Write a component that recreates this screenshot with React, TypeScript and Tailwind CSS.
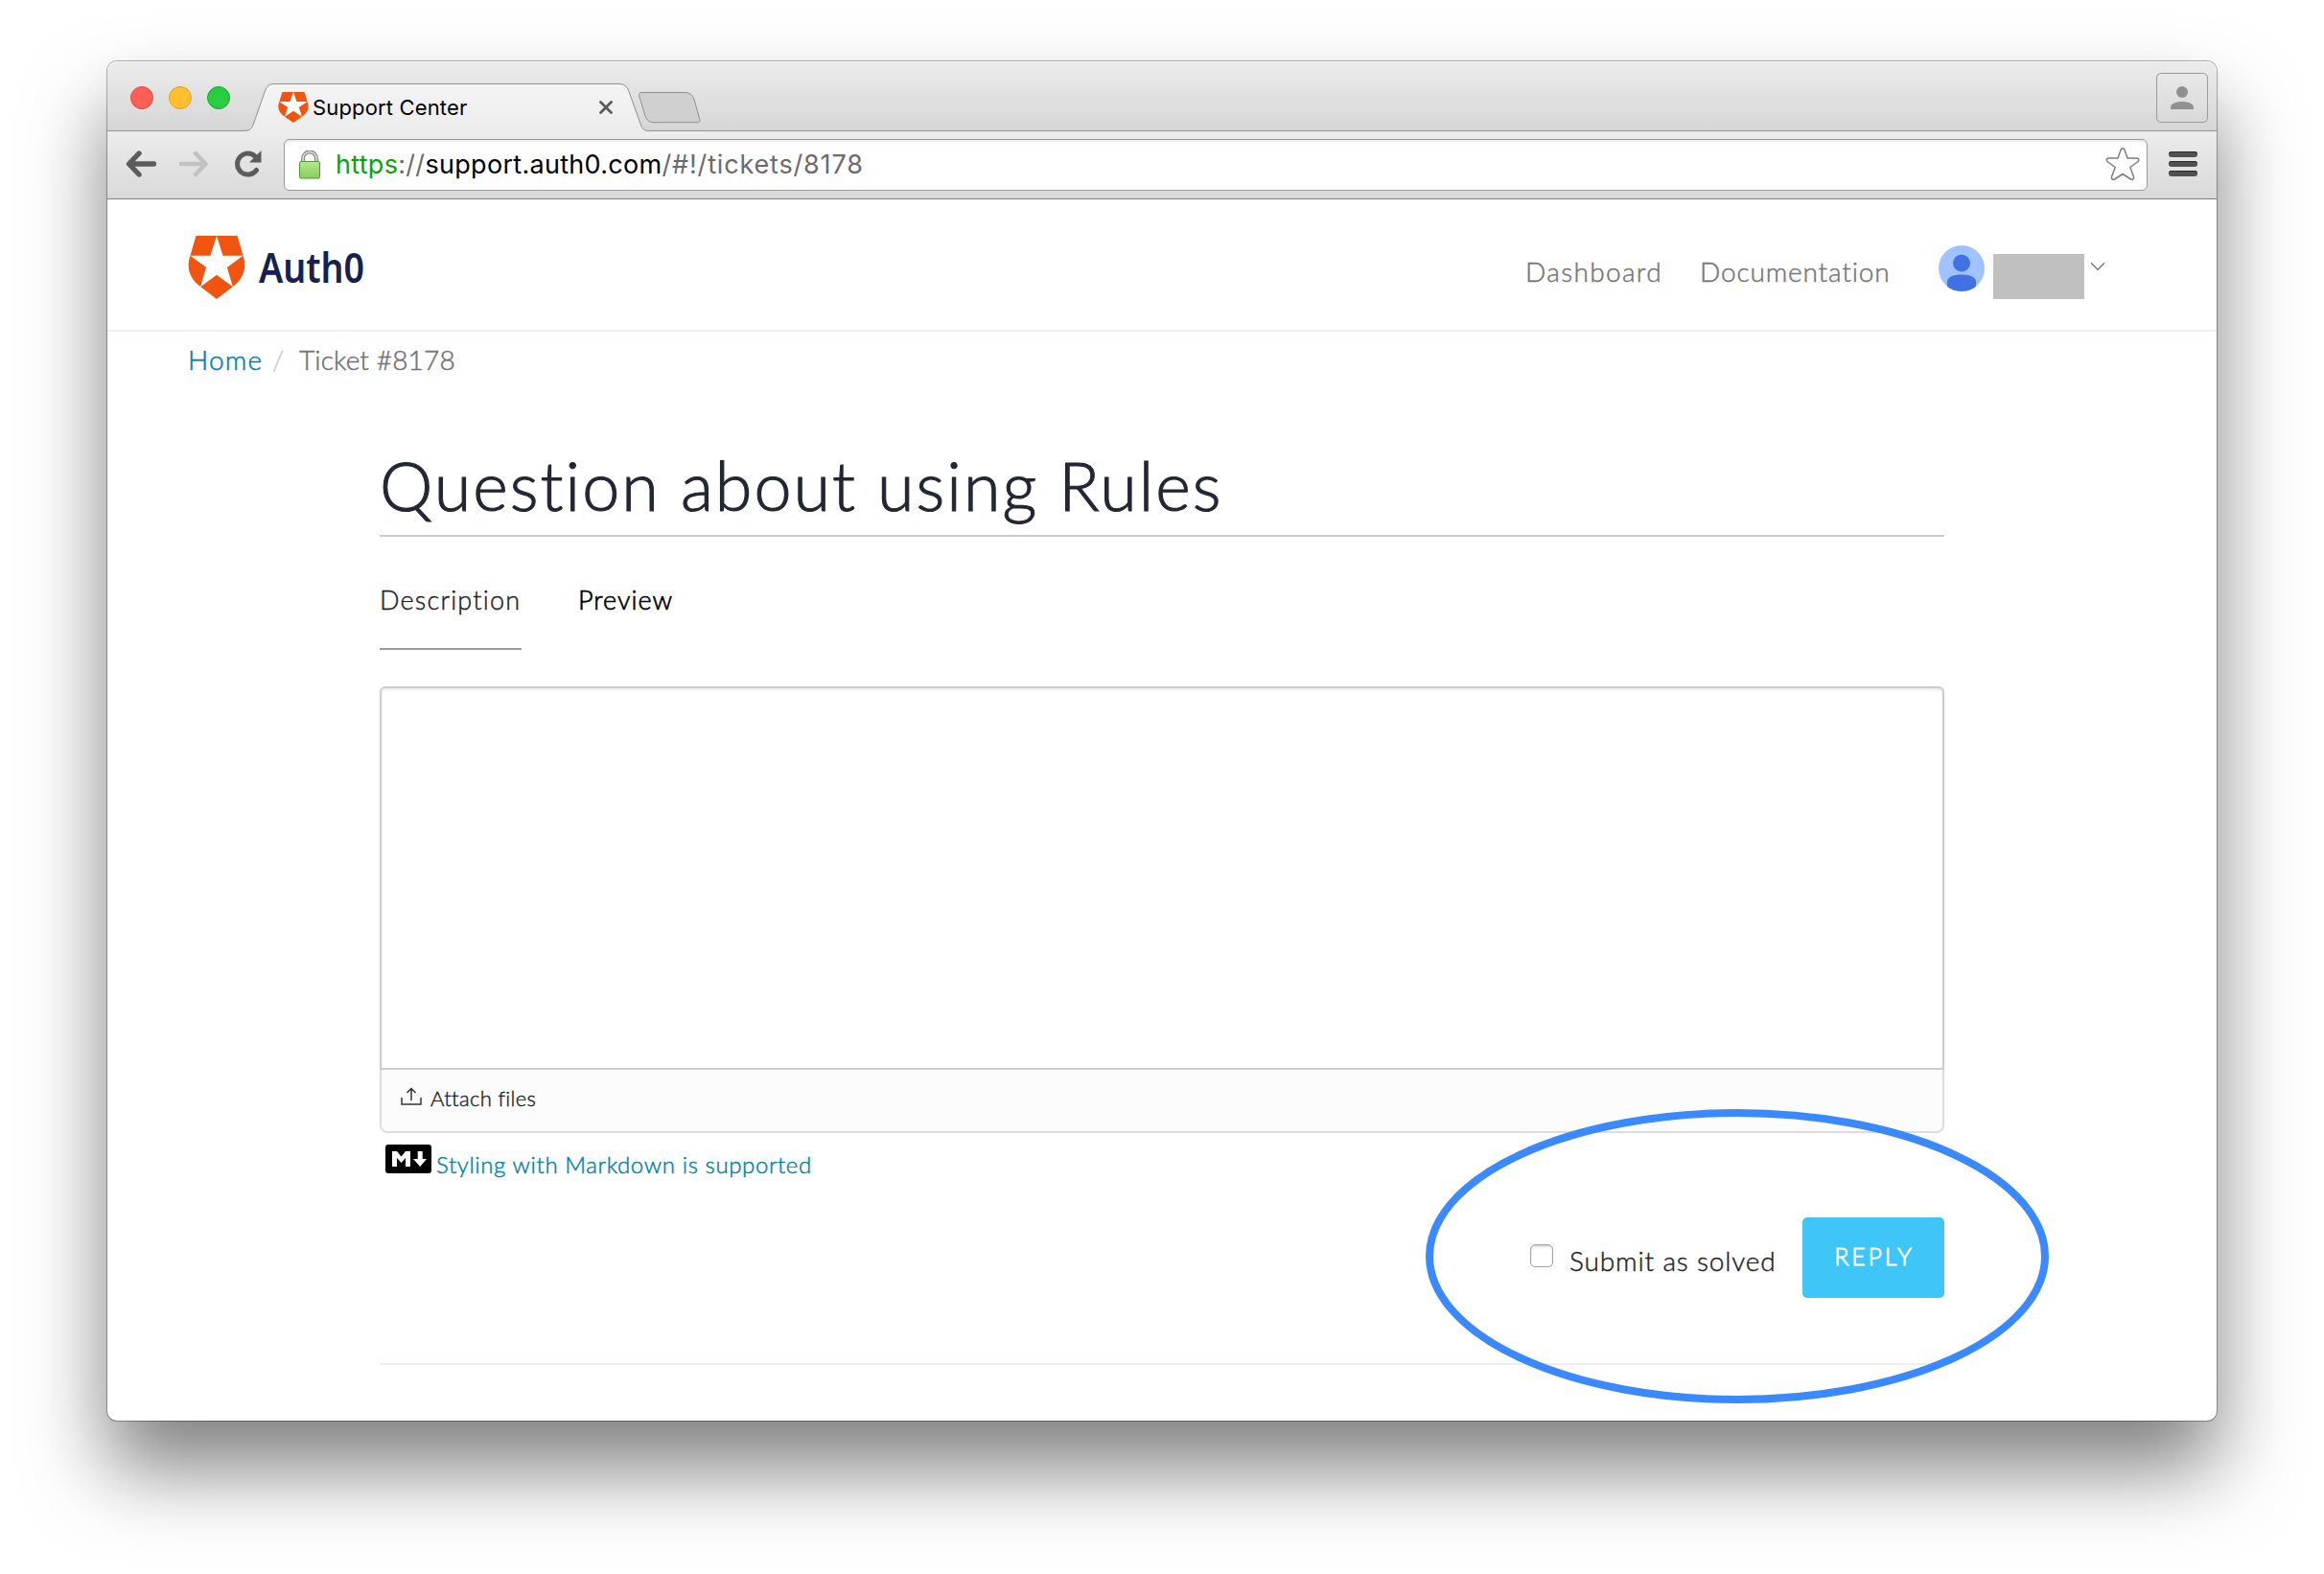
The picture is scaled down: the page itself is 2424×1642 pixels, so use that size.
import type { ReactNode } from "react";

function Shield({ className }: { className: string }) {
  return (
    <svg viewBox="48 78 179 198" preserveAspectRatio="none" className={className}>
      <path d="M73 78H202L219 138C234 180 218 215 188 237L137.500 276L87 237C57 215 40 180 56 138Z" fill="#f0540f" />
      <path
        d="M137.500 78L157 140H219.500L170 177L188 238L137.500 200L87 238L105 177L55.500 140H118Z"
        fill="#fff"
      />
    </svg>
  );
}

function TrafficLights() {
  return (
    <div className="mt-[26px] flex gap-4 self-start">
      <span className="size-6 rounded-full border border-[#e2463f] bg-[#ff5f57]" />
      <span className="size-6 rounded-full border border-[#dfa023] bg-[#ffbf2f]" />
      <span className="size-6 rounded-full border border-[#17a82c] bg-[#28ce41]" />
    </div>
  );
}

function BrowserTab() {
  return (
    <div className="relative -mb-px ml-[10px] flex h-[50px] w-[428px] items-center pl-10">
      <svg viewBox="0 0 428 50" className="absolute inset-0 h-[50px] w-[428px]">
        <defs>
          <linearGradient id="tab" x1="0" y1="0" x2="0" y2="1">
            <stop offset="0" stopColor="#f4f4f4" />
            <stop offset="1" stopColor="#ececec" />
          </linearGradient>
        </defs>
        <path
          d="M5 50V49.500C11 49.500 12.500 47 14.500 42L26 9C28.500 2 31 .5 37 .5H395C401 .5 404 3 406 8.500L418 42C420 47.500 421.500 49.500 426 49.500V50Z"
          fill="url(#tab)"
        />
        <path
          d="M4 49.500C11 49.500 12.500 47 14.500 42L26 9C28.500 2 31 .5 37 .5H395C401 .5 404 3 406 8.500L418 42C420 47.500 421.500 49.500 427 49.500"
          fill="none"
          stroke="#8f8f8f"
        />
      </svg>
      <Shield className="relative h-8 w-8" />
      <span className="relative ml-1 w-[299px] font-[Inter] text-[22px] tracking-[0.15px] text-black">
        Support Center
      </span>
      <svg viewBox="0 0 14 14" className="relative size-[14px] shrink-0">
        <path d="M1.500 1.500L12.500 12.500M12.500 1.500L1.500 12.500" stroke="#5a5a5a" strokeWidth="2.800" strokeLinecap="round" />
      </svg>
    </div>
  );
}

function TabStrip() {
  return (
    <div className="flex h-[73px] items-end rounded-t-[10px] border-b border-[#929292] bg-linear-to-b from-[#ececec] to-[#d6d6d6] pl-6 shadow-[inset_0_1px_0_#f6f6f6]">
      <TrafficLights />
      <BrowserTab />
      <svg viewBox="0 0 68 36" className="mb-[6px] -ml-[14px] h-9 w-[68px]">
        <path
          d="M6 2.500H49C56 2.500 58 5 60 9.500L65.500 29.500C66.500 33 65.500 33.700 63 33.700H19C13 33.700 11 31.500 9 27L3 7C2 3.500 3 2.500 6 2.500Z"
          fill="#d0d0d0"
          stroke="#8f8f8f"
        />
      </svg>
      <div className="mt-3 mr-[9px] ml-auto flex h-[52px] w-[54px] justify-center self-start rounded-[5px] border border-[#9b9b9b] pt-[13px]">
        <svg viewBox="0 0 24 24" className="size-6">
          <circle cx="12" cy="6" r="6" fill="#919191" />
          <path d="M0 24V22C0 18 6 16 12 16S24 18 24 22V24Z" fill="#919191" />
        </svg>
      </div>
    </div>
  );
}

function Toolbar() {
  return (
    <div className="flex h-[71px] items-center border-b border-[#808080] bg-linear-to-b from-[#ececec] to-[#d9d9d9] pl-[19px]">
      <svg viewBox="0 0 32 28" className="mb-0.5 h-7 w-8">
        <path d="M29.500 14H4M14 3L3.500 14L14 25" fill="none" stroke="#5c5c5c" strokeWidth="5.400" strokeLinecap="round" strokeLinejoin="round" />
      </svg>
      <svg viewBox="0 0 32 28" className="mb-0.5 ml-[23px] h-7 w-8">
        <path d="M3 14H28M18 3L28.500 14L18 25" fill="none" stroke="#c2c2c2" strokeWidth="4.600" strokeLinecap="round" strokeLinejoin="round" />
      </svg>
      <svg viewBox="0 0 28 28" className="mb-0.5 ml-[27px] size-7">
        <path d="M22.500 20.500A11 11 0 1 1 21.500 6.500" fill="none" stroke="#5c5c5c" strokeWidth="5" strokeLinecap="round" />
        <path d="M27.500 0V12.500H15Z" fill="#5c5c5c" />
      </svg>
      <div className="ml-[23px] flex h-[54px] w-[1944px] items-center rounded-md border border-[#9a9a9a] bg-white pr-[7px] pl-[15px] shadow-[inset_0_2px_2px_rgba(0,0,0,0.08)]">
        <svg viewBox="0 0 22 30" className="h-[30px] w-[22px]">
          <defs>
            <linearGradient id="lock" x1="0" y1="0" x2="0" y2="1">
              <stop offset="0" stopColor="#b7e78d" />
              <stop offset="1" stopColor="#86cf5e" />
            </linearGradient>
          </defs>
          <path d="M4 12V8.500A7 7 0 0 1 18 8.500V12" fill="none" stroke="#858585" strokeWidth="4" />
          <path d="M4 12V8.500A7 7 0 0 1 18 8.500V12" fill="none" stroke="#e0e0e0" strokeWidth="1.600" />
          <rect x="0.500" y="11.500" width="21" height="17.500" rx="1.500" fill="url(#lock)" stroke="#4f9a35" />
        </svg>
        <span className="ml-4 flex-1 font-[Inter] text-[27px] tracking-[0.83px] whitespace-nowrap text-[#6b6b6b]">
          <span className="tracking-[0.3px]">
            <span className="text-[#07a30a]">https</span>://<span className="text-black">support.auth0.com</span>
          </span>
          /#!/tickets/8178
        </span>
        <svg viewBox="0 0 36 36" className="mb-0.5 size-9">
          <path
            d="M16.200 3Q18 .2 19.800 3L23 12H33Q36 13 34 15.500L25.800 21.500L29.500 31.500Q30 35 26.500 34L18 28.500L9.500 34Q6 35 6.500 31.500L10.200 21.500L2 15.500Q0 13 3 12H13Z"
            fill="#fff"
            stroke="#7d7d7d"
            strokeWidth="1.500"
            strokeLinejoin="round"
          />
        </svg>
      </div>
      <div className="mb-0.5 ml-[22px] flex flex-col gap-1">
        <span className="h-1.5 w-[30px] rounded-full bg-[#505050] shadow-[inset_0_1px_0_#2b2b2b]" />
        <span className="h-1.5 w-[30px] rounded-full bg-[#505050] shadow-[inset_0_1px_0_#2b2b2b]" />
        <span className="h-1.5 w-[30px] rounded-full bg-[#505050] shadow-[inset_0_1px_0_#2b2b2b]" />
      </div>
    </div>
  );
}

function NavLink({ children, className }: { children: ReactNode; className: string }) {
  return (
    <a className={`mt-[19px] block text-[28px] leading-[36px] whitespace-nowrap text-[#757575] [-webkit-text-stroke:0.45px] ${className}`}>
      {children}
    </a>
  );
}

function SiteHeader() {
  return (
    <header className="flex h-[138px] items-start border-b-2 border-[#efefef] pt-[38px] pl-[84px]">
      <Shield className="h-[66px] w-[60px]" />
      <span className="mt-1.5 ml-[14px] origin-left scale-x-[0.875] font-['Noto_Sans'] text-[43px] leading-[54px] font-semibold text-[#16214d]">
        Auth0
      </span>
      <nav className="mr-[116px] ml-auto flex items-start">
        <NavLink className="w-[182px] tracking-[1.35px]">Dashboard</NavLink>
        <NavLink className="w-[249px] tracking-[0.85px]">Documentation</NavLink>
        <svg viewBox="0 0 48 48" className="mt-[10px] size-12">
          <defs>
            <clipPath id="avatar">
              <circle cx="24" cy="24" r="24" />
            </clipPath>
          </defs>
          <g clipPath="url(#avatar)">
            <rect width="48" height="48" fill="#a0c3ff" />
            <circle cx="24" cy="18.500" r="9" fill="#4072e3" />
            <path d="M9 50V38C9 33 15 30.500 24 30.500S39 33 39 38V50Z" fill="#4072e3" />
          </g>
        </svg>
        <span className="mt-[19px] ml-[9px] h-[47px] w-[95px] bg-[#c0c0c0]" />
        <svg viewBox="0 0 16 10" className="mt-[27px] ml-1.5 h-[10px] w-4">
          <path d="M1 1.200L8 8.200L15 1.200" fill="none" stroke="#777" strokeWidth="1.400" />
        </svg>
      </nav>
    </header>
  );
}

function Breadcrumb() {
  return (
    <div className="flex h-[60px] items-center pb-0.5 pl-[84px] text-[28px] [-webkit-text-stroke:0.5px]">
      <a className="w-[88px] tracking-[1.2px] text-[#0080ab]">Home</a>
      <span className="w-[28px] text-[#ccc]">/</span>
      <span className="tracking-[0.15px] text-[#727272]">Ticket #8178</span>
    </div>
  );
}

function Editor() {
  return (
    <>
      <div className="mt-[38px] h-[400px] rounded-t-md border-2 border-[#ccc] bg-white shadow-[inset_0_2px_3px_rgba(0,0,0,0.08)]" />
      <div className="flex h-[66px] items-center rounded-b-lg border-2 border-t-0 border-[#ddd] bg-[#fcfcfc] pb-1.5 pl-5">
        <svg viewBox="0 0 22 19" className="mb-1 h-[19px] w-[22px]">
          <path d="M1 11V18H21V11M11 14V1.500M6.500 6L11 1.500L15.500 6" fill="none" stroke="#333" strokeWidth="1.500" />
        </svg>
        <span className="ml-[9px] text-[22px] tracking-[0.35px] text-[#1a1a1a] [-webkit-text-stroke:0.4px]">Attach files</span>
      </div>
      <div className="mt-3 flex h-11 items-start pl-1.5">
        <span className="flex h-[30px] w-12 items-center rounded-[3px] bg-black">
          <svg viewBox="0 0 48 30" className="h-[30px] w-12">
            <path d="M7 23V7H12L16.500 12.500L21 7H26V23H21V14L16.500 19L12 14V23ZM33.700 7H38.700V15H43L36.200 23L29 15H33.700Z" fill="#fff" />
          </svg>
        </span>
        <a className="mt-1.5 ml-[5px] text-[24px] leading-[30px] tracking-[0.62px] text-[#0080ab] [-webkit-text-stroke:0.45px]">
          Styling with Markdown is supported
        </a>
      </div>
    </>
  );
}

function Actions() {
  return (
    <div className="mt-8 flex h-[84px] items-start justify-end">
      <span className="mt-7 size-6 rounded-[5px] border border-[#a3a3a3] bg-white shadow-[inset_0_2px_2px_rgba(0,0,0,0.15)]" />
      <label className="mt-[26px] ml-[17px] w-[243px] text-[28px] leading-[38px] tracking-[0.85px] whitespace-nowrap text-[#1c1c1c] [-webkit-text-stroke:0.4px]">
        Submit as solved
      </label>
      <button className="h-[84px] w-[148px] rounded-[5px] bg-[#3dc6f7] pb-0.5 pl-0.5 text-[25px] tracking-[2.8px] text-white [-webkit-text-stroke:0.8px]">
        REPLY
      </button>
    </div>
  );
}

export default function App() {
  return (
    <div className="relative h-[1642px] w-[2424px] overflow-hidden bg-white pt-16 pl-28 font-[Lato] font-light">
      <div className="h-[1418px] w-[2200px] rounded-[10px] bg-white shadow-[0_0_0_1px_rgba(0,0,0,0.3),0_50px_84px_rgba(0,0,0,0.5)]">
        <div className="font-normal">
          <TabStrip />
          <Toolbar />
        </div>
        <SiteHeader />
        <Breadcrumb />
        <main className="mx-[284px]">
          <h1 className="mt-[58px] border-b-2 border-[#ccc] pb-[10px] text-[70px] leading-[84px] tracking-[2.03px] text-[#222733] [-webkit-text-stroke:1.1px]">
            Question about using Rules
          </h1>
          <div className="mt-10 flex gap-[59px] text-[27px] leading-[51px] [-webkit-text-stroke:0.4px]">
            <span className="w-[148px] border-b-2 border-[#999] pb-[25px] tracking-[1.2px] text-[#1c1c1c]">Description</span>
            <span className="tracking-[1px] text-black [-webkit-text-stroke:0.65px]">Preview</span>
          </div>
          <Editor />
          <Actions />
          <hr className="mt-[68px] border-t-2 border-[#eee]" />
        </main>
      </div>
      <svg viewBox="0 0 660 316" className="absolute top-[1153px] left-[1482px] h-[316px] w-[660px]">
        <ellipse cx="330" cy="157.500" rx="321" ry="149.500" fill="none" stroke="#3b89ff" strokeWidth="8" />
      </svg>
    </div>
  );
}
